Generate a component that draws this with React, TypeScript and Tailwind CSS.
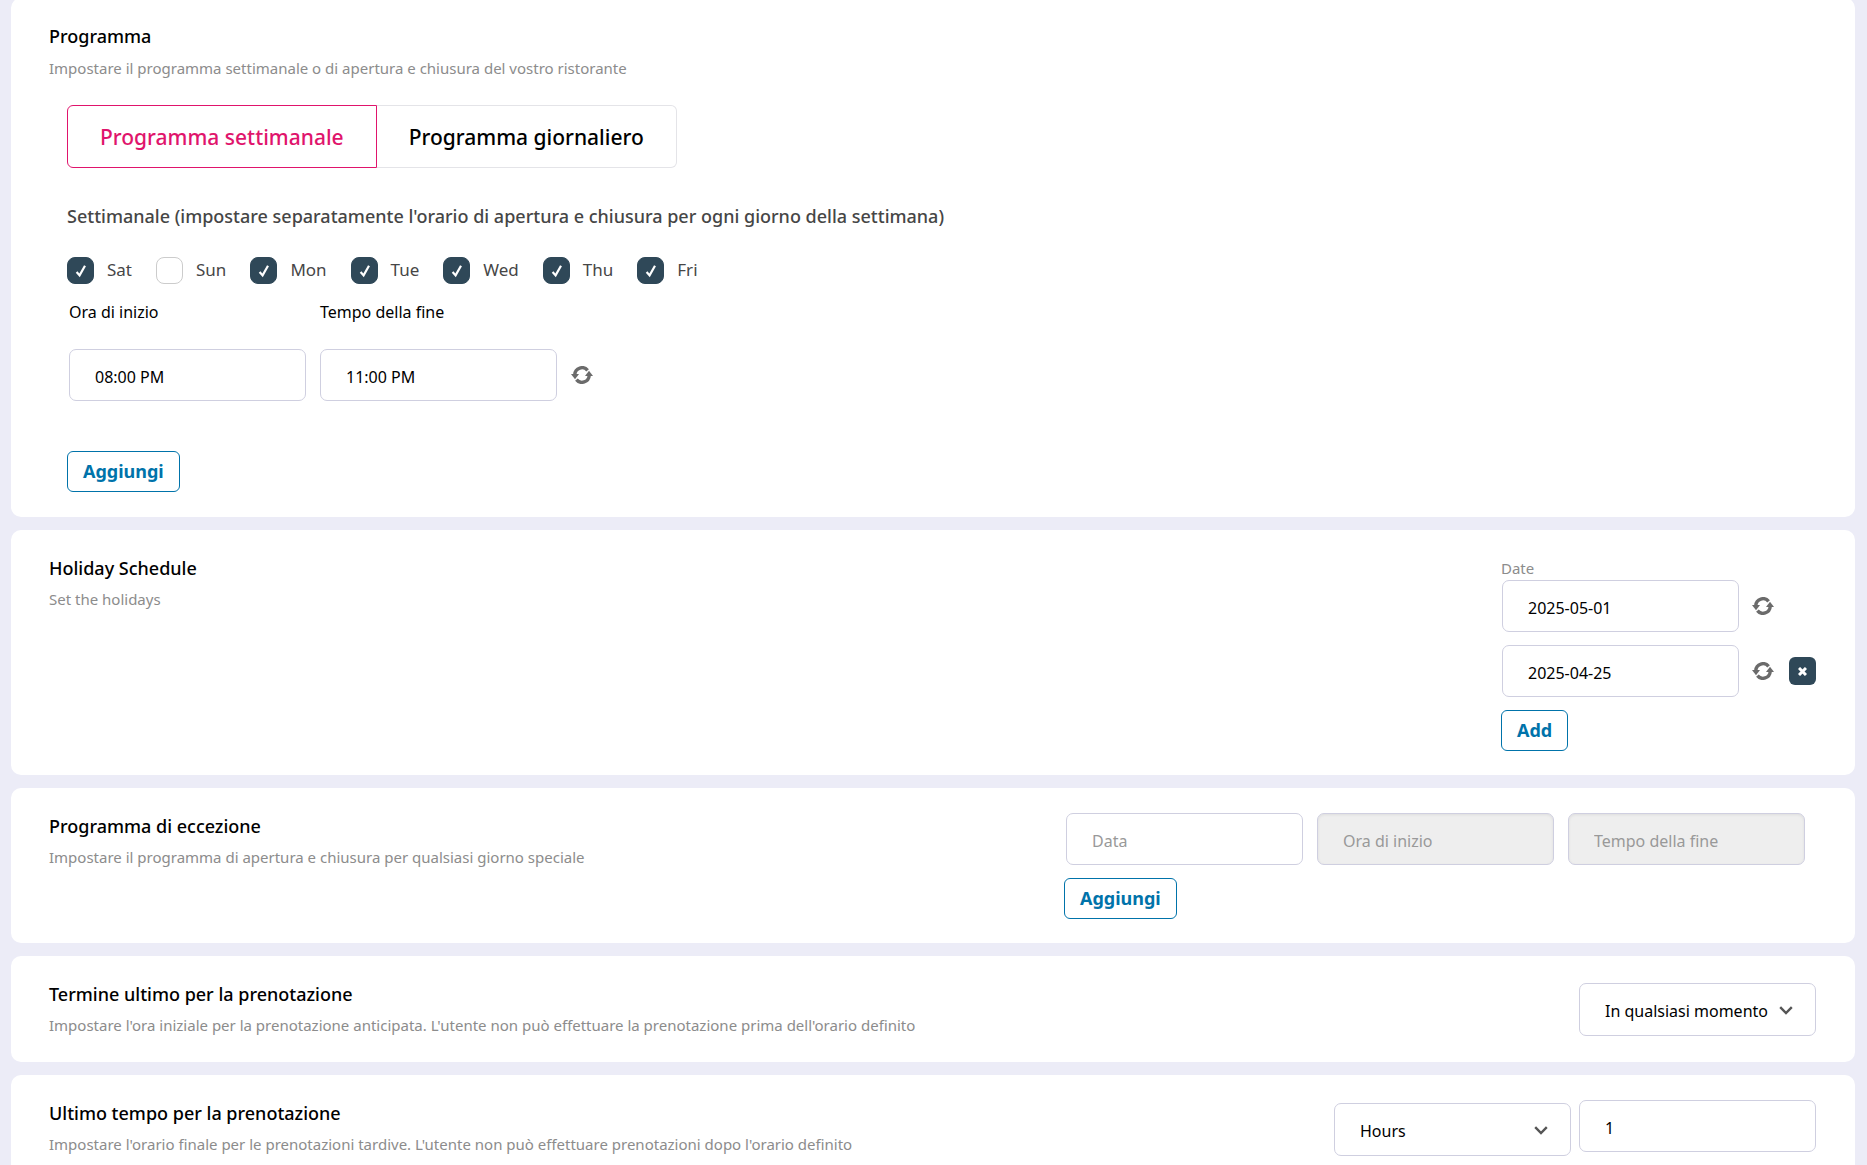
import React, { useState } from 'react';

interface SectionProps {
    title: string;
    description: string;
    children: React.ReactNode;
    className?: string;
}

interface IconButtonProps {
    label: string;
    onClick?: () => void;
}

const days = ['Sat', 'Sun', 'Mon', 'Tue', 'Wed', 'Thu', 'Fri'];

const fieldClasses =
    'block h-[52px] w-[237px] rounded-[7px] border border-[#cfcfe0] px-[25px] pt-1 text-base text-black placeholder:text-[#999] placeholder:opacity-100 outline-none focus:border-[#0073aa] disabled:bg-[#eee] disabled:shadow-[inset_0_1px_3px_rgba(0,0,0,0.07)]';

const selectClasses =
    'block h-[53px] w-[237px] appearance-none rounded-[7px] border border-[#cfcfe0] bg-white pl-[25px] pr-10 pt-0.5 text-base text-black outline-none focus:border-[#0073aa]';

const Section: React.FC<SectionProps> = ({ title, description, children, className = '' }) => (
    <section className={`flex items-start justify-between rounded-[10px] bg-white pl-[38px] pr-[39px] ${className}`}>
        <div className="pt-[26px]">
            <h2 className="text-lg/6 font-medium text-black">{title}</h2>
            <p className="mt-[7px] text-[15px]/6 text-[#8c8c8c]">{description}</p>
        </div>
        {children}
    </section>
);

const RefreshButton: React.FC<IconButtonProps> = ({ label, onClick }) => (
    <button type="button" aria-label={label} onClick={onClick} className="text-[#6b6b6b] hover:text-black">
        <svg width="22" height="18" viewBox="0 0 22 18" aria-hidden="true">
            <path d="M3.8 8.5A7.2 7.2 0 0 1 16.6 4.4" fill="none" stroke="currentColor" strokeWidth="3.4" />
            <path d="M18.2 9.5A7.2 7.2 0 0 1 5.4 13.6" fill="none" stroke="currentColor" strokeWidth="3.4" />
            <path d="M0 8h8l-4 5.2z" fill="currentColor" />
            <path d="M22 10h-8l4-5.2z" fill="currentColor" />
        </svg>
    </button>
);

const RemoveButton: React.FC<IconButtonProps> = ({ label, onClick }) => (
    <button
        type="button"
        aria-label={label}
        onClick={onClick}
        className="flex h-7 w-[27px] items-center justify-center rounded-md bg-[#2f4858] text-white"
    >
        <svg width="9" height="9" viewBox="0 0 9 9" fill="none" stroke="currentColor" strokeWidth="3" aria-hidden="true">
            <path d="M1 1l7 7M8 1L1 8" />
        </svg>
    </button>
);

const AddButton: React.FC<{ children: React.ReactNode; onClick?: () => void }> = ({ children, onClick }) => (
    <button
        type="button"
        onClick={onClick}
        className="flex h-[41px] items-center rounded-md border border-[#0073aa] bg-white px-[15px] pb-0.5 text-lg font-bold text-[#0073aa]"
    >
        {children}
    </button>
);

const Chevron = () => (
    <svg
        className="pointer-events-none absolute right-[23px] top-[23px]"
        width="14"
        height="9"
        viewBox="0 0 14 9"
        fill="none"
        stroke="#555"
        strokeWidth="2.4"
        aria-hidden="true"
    >
        <path d="M1.2 1.2L7 7l5.8-5.8" />
    </svg>
);

const DayCheckbox: React.FC<{ day: string; checked: boolean; onChange: () => void }> = ({ day, checked, onChange }) => (
    <label className="flex items-center gap-[13px]">
        <span className="relative block size-[27px]">
            <input
                type="checkbox"
                checked={checked}
                onChange={onChange}
                className="block size-[27px] appearance-none rounded-lg border border-[#ccc] bg-white checked:border-[#2f4858] checked:bg-[#2f4858]"
            />
            {checked && (
                <svg className="pointer-events-none absolute left-2 top-[7px]" width="12" height="14" viewBox="0 0 12 14" aria-hidden="true">
                    <path d="M1.6 8L4.6 11.4L10 1.8" fill="none" stroke="#fff" strokeWidth="2.2" />
                </svg>
            )}
        </span>
        <span className="pb-0.5 text-[17px]/6 text-[#464646]">{day}</span>
    </label>
);

export default function App() {
    const [mode, setMode] = useState<'weekly' | 'daily'>('weekly');
    const [openDays, setOpenDays] = useState<string[]>(days.filter((day) => day !== 'Sun'));
    const [start, setStart] = useState('08:00 PM');
    const [end, setEnd] = useState('11:00 PM');
    const [holidays, setHolidays] = useState(['2025-05-01', '2025-04-25']);

    const toggleDay = (day: string) =>
        setOpenDays((prev) => (prev.includes(day) ? prev.filter((d) => d !== day) : [...prev, day]));

    const setHoliday = (index: number, value: string) =>
        setHolidays((prev) => prev.map((h, i) => (i === index ? value : h)));

    const tabClasses = (active: boolean) =>
        active ? 'border-[#e0146c] text-[#e0146c]' : 'border-[#e4e4e8] text-black';

    return (
        <main className="-mt-0.5 flex min-h-screen flex-col gap-[13px] bg-[#ececf7] pb-3 pl-[11px] pr-3 font-['Noto_Sans',sans-serif]">
            <section className="rounded-[10px] bg-white pb-[25px] pl-[38px] pr-[39px] pt-[26px]">
                <h2 className="text-lg/6 font-medium text-black">Programma</h2>
                <p className="mt-2 text-[15px]/6 text-[#8c8c8c]">
                    Impostare il programma settimanale o di apertura e chiusura del vostro ristorante
                </p>

                <div className="pl-[18px]">
                    <div className="mt-[25px] flex">
                        <button
                            type="button"
                            onClick={() => setMode('weekly')}
                            className={`h-[63px] rounded-l-md border px-8 pt-0.5 text-[21px] font-medium ${tabClasses(mode === 'weekly')}`}
                        >
                            Programma settimanale
                        </button>
                        <button
                            type="button"
                            onClick={() => setMode('daily')}
                            className={`h-[63px] rounded-r-md border border-l-0 px-8 pt-0.5 text-[21px] font-medium ${tabClasses(mode === 'daily')}`}
                        >
                            Programma giornaliero
                        </button>
                    </div>

                    <h3 className="mt-9 text-lg/6 font-medium text-[#464646]">
                        Settimanale (impostare separatamente l'orario di apertura e chiusura per ogni giorno della settimana)
                    </h3>

                    <div className="mt-[29px] flex gap-6">
                        {days.map((day) => (
                            <DayCheckbox key={day} day={day} checked={openDays.includes(day)} onChange={() => toggleDay(day)} />
                        ))}
                    </div>

                    <div className="mt-4 flex items-end gap-3.5 pl-0.5">
                        <div>
                            <label htmlFor="start" className="mb-[25px] block text-base/6 text-black">Ora di inizio</label>
                            <input id="start" type="text" value={start} onChange={(e) => setStart(e.target.value)} className={fieldClasses} />
                        </div>
                        <div>
                            <label htmlFor="end" className="mb-[25px] block text-base/6 text-black">Tempo della fine</label>
                            <input id="end" type="text" value={end} onChange={(e) => setEnd(e.target.value)} className={fieldClasses} />
                        </div>
                        <div className="flex h-[52px] items-center">
                            <RefreshButton label="Reimposta orario" onClick={() => { setStart(''); setEnd(''); }} />
                        </div>
                    </div>

                    <div className="mt-[50px] flex">
                        <AddButton>Aggiungi</AddButton>
                    </div>
                </div>
            </section>

            <Section title="Holiday Schedule" description="Set the holidays" className="pb-6">
                <div className="pt-[26px]">
                    <label htmlFor="holiday-0" className="block text-[15px]/6 text-[#8c8c8c]">Date</label>
                    <div className="flex flex-col items-start gap-[13px]">
                        {holidays.map((date, i) => (
                            <div key={i} className="flex items-center gap-[13px] pl-px">
                                <input
                                    id={`holiday-${i}`}
                                    type="text"
                                    aria-label={i > 0 ? 'Date' : undefined}
                                    value={date}
                                    onChange={(e) => setHoliday(i, e.target.value)}
                                    className={fieldClasses}
                                />
                                <div className="flex items-center gap-[15px]">
                                    <RefreshButton label="Reset date" onClick={() => setHoliday(i, '')} />
                                    {i > 0 && (
                                        <RemoveButton
                                            label="Remove date"
                                            onClick={() => setHolidays((prev) => prev.filter((_, j) => j !== i))}
                                        />
                                    )}
                                </div>
                            </div>
                        ))}
                        <AddButton onClick={() => setHolidays((prev) => [...prev, ''])}>Add</AddButton>
                    </div>
                </div>
            </Section>

            <Section
                title="Programma di eccezione"
                description="Impostare il programma di apertura e chiusura per qualsiasi giorno speciale"
                className="pb-6"
            >
                <div className="flex flex-col items-start gap-[13px] pr-[11px] pt-[25px]">
                    <div className="flex gap-3.5 pl-0.5">
                        <input type="text" placeholder="Data" aria-label="Data" className={fieldClasses} />
                        <input type="text" placeholder="Ora di inizio" aria-label="Ora di inizio" disabled className={fieldClasses} />
                        <input type="text" placeholder="Tempo della fine" aria-label="Tempo della fine" disabled className={fieldClasses} />
                    </div>
                    <AddButton>Aggiungi</AddButton>
                </div>
            </Section>

            <Section
                title="Termine ultimo per la prenotazione"
                description="Impostare l'ora iniziale per la prenotazione anticipata. L'utente non può effettuare la prenotazione prima dell'orario definito"
                className="pb-[25px]"
            >
                <div className="pt-[27px]">
                    <div className="relative">
                        <select aria-label="Termine ultimo per la prenotazione" className={selectClasses}>
                            <option>In qualsiasi momento</option>
                        </select>
                        <Chevron />
                    </div>
                </div>
            </Section>

            <Section
                title="Ultimo tempo per la prenotazione"
                description="Impostare l'orario finale per le prenotazioni tardive. L'utente non può effettuare prenotazioni dopo l'orario definito"
                className="pb-[26px]"
            >
                <div className="flex items-start gap-2 pt-[25px]">
                    <div className="pt-[3px]">
                        <div className="relative">
                            <select aria-label="Unità di tempo" className={selectClasses}>
                                <option>Hours</option>
                                <option>Minutes</option>
                            </select>
                            <Chevron />
                        </div>
                    </div>
                    <input type="text" defaultValue="1" aria-label="Valore" className={fieldClasses} />
                </div>
            </Section>
        </main>
    );
}
